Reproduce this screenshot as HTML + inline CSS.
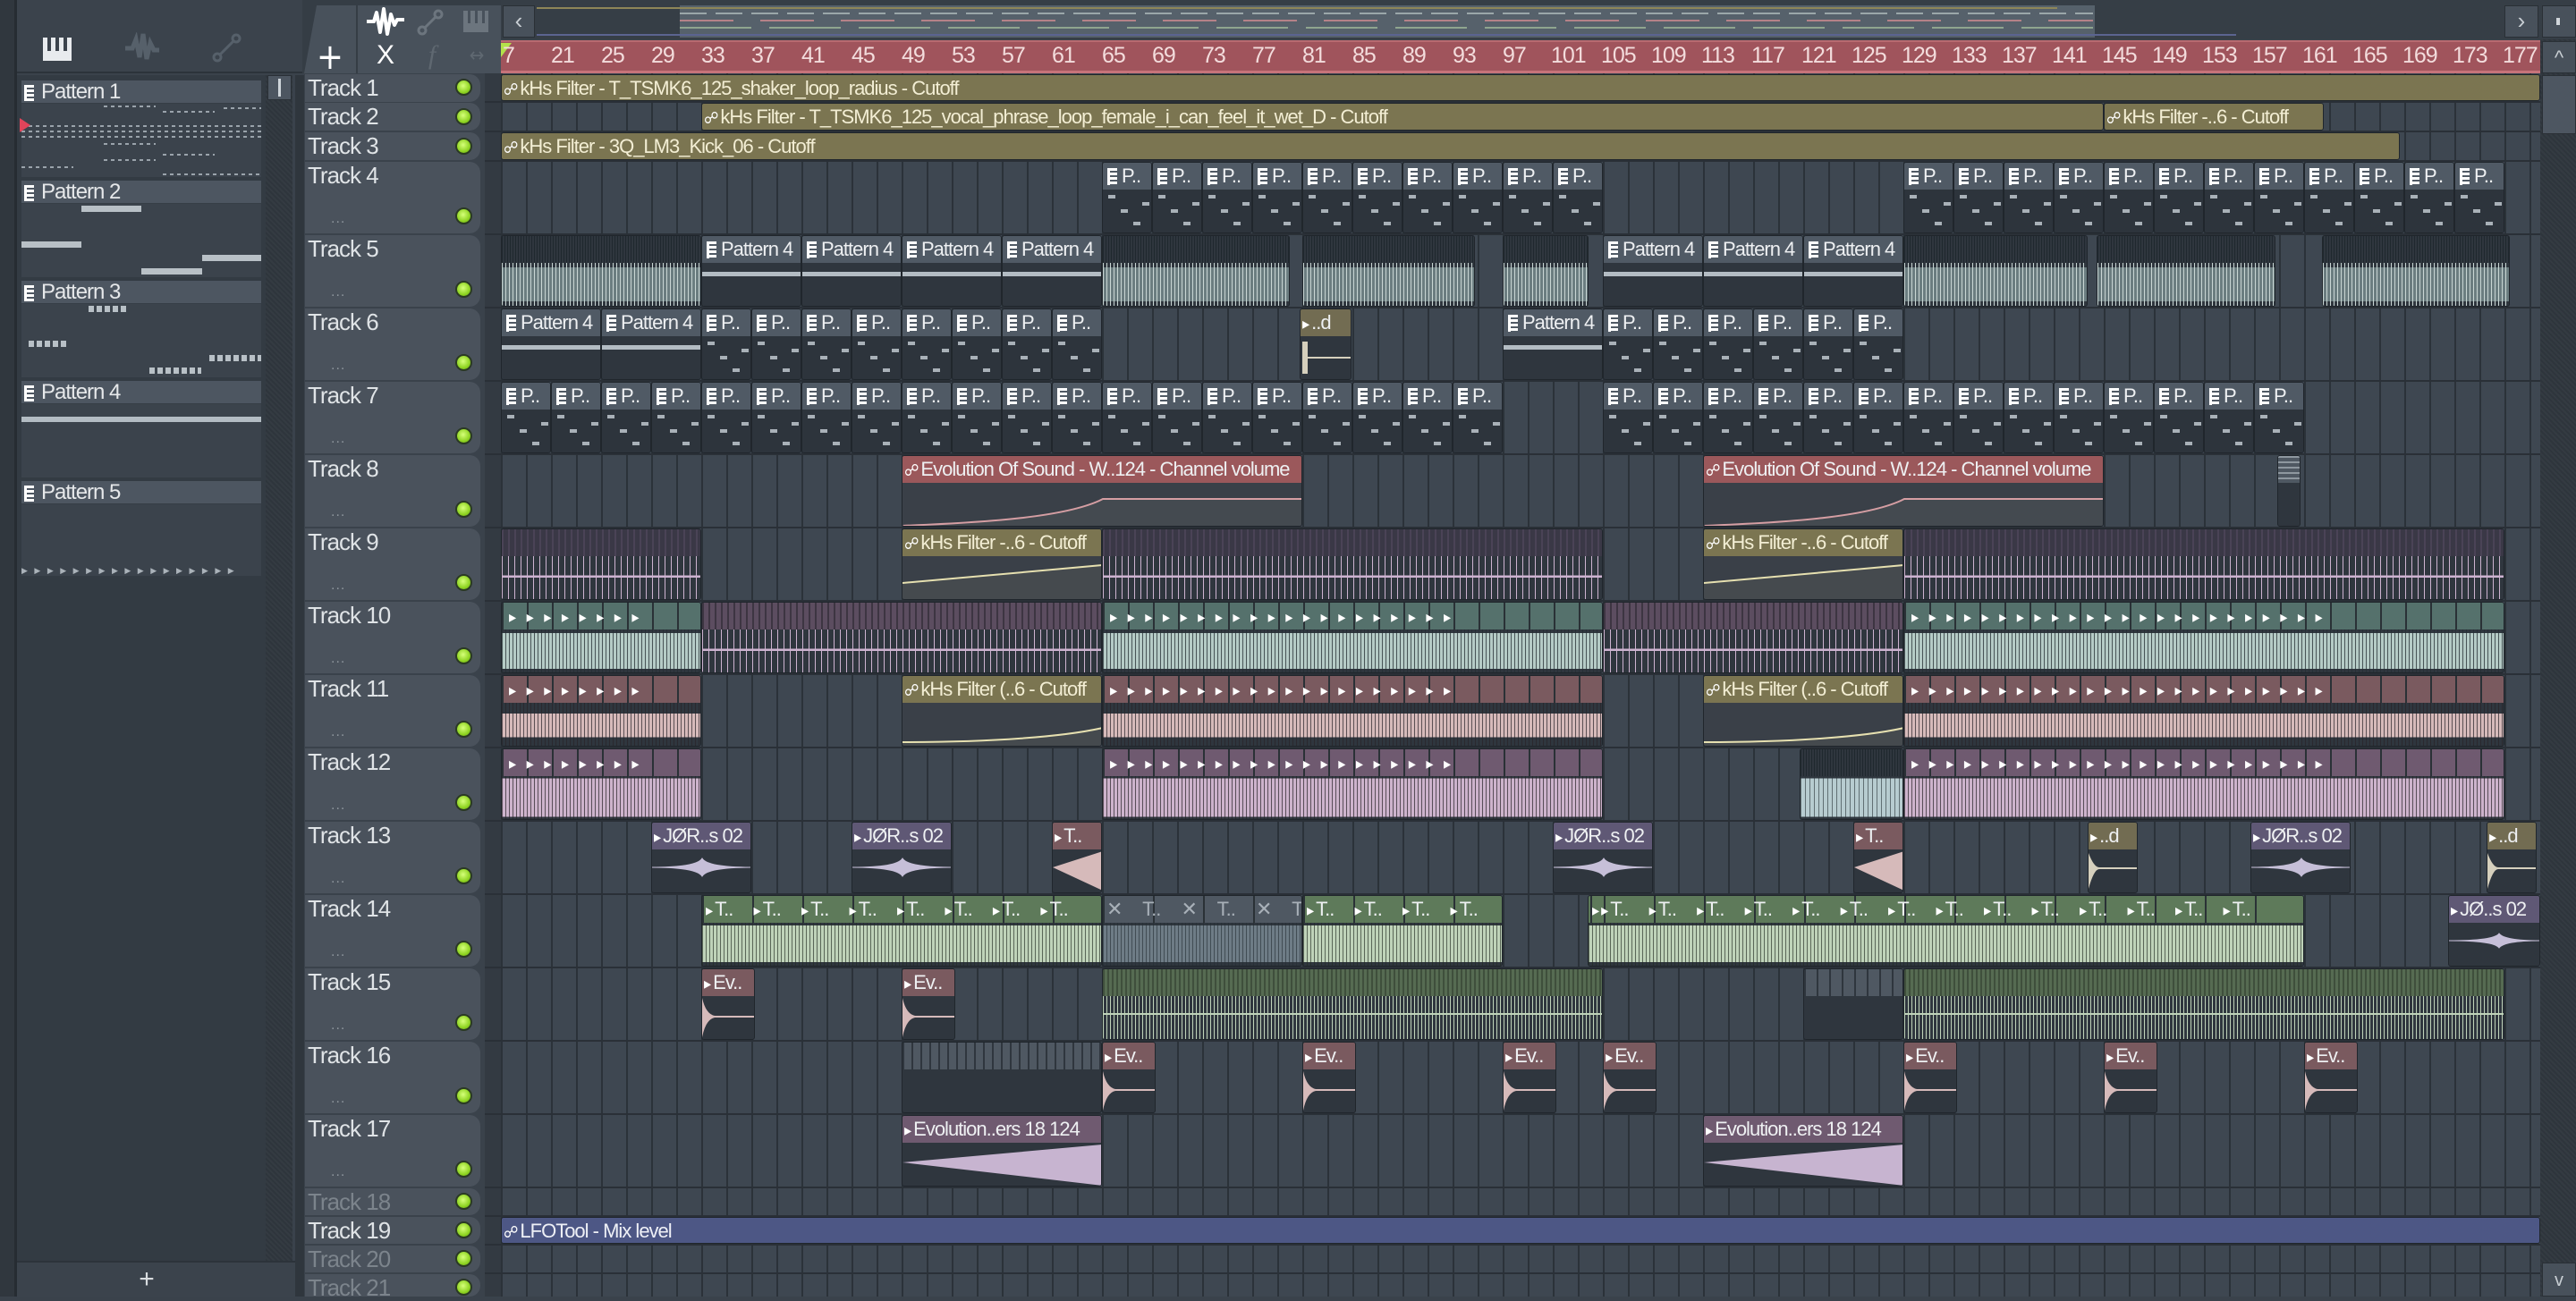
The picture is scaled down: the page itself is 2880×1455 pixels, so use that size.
<!DOCTYPE html>
<html><head><meta charset="utf-8"><style>
*{box-sizing:border-box}
body{margin:0;width:2880px;height:1450px;background:#3a424b;overflow:hidden;position:relative;font-family:"Liberation Sans Narrow","Liberation Sans",sans-serif;font-stretch:condensed}
.a{position:absolute}
.grid{left:560px;top:82px;width:2280px;height:1368px;background:#3e4751;background-image:repeating-linear-gradient(90deg,#2b3239 0 2px,transparent 2px 28px)}
.r{position:absolute;left:560px;width:2280px;overflow:hidden}
.hl{position:absolute;left:542px;width:2298px;height:2px;background:#2a3037}
.c{position:absolute;top:1px;bottom:1px;border:1px solid #20262c;border-radius:3px;overflow:hidden;background:#2f363e}
.h{height:30px;line-height:30px;font-size:22px;letter-spacing:-1px;color:#eef0f2;white-space:nowrap;overflow:hidden;padding-left:2px}
.sm .h{height:100%;line-height:30px}
.w{position:absolute;left:0;right:0;top:30px;bottom:0}
.pi{display:inline-block;width:11px;height:19px;margin:0 5px -3px 3px;background:repeating-linear-gradient(#fff 0 3px,transparent 3px 5px);border-left:3px solid #fff}
.ai{font-family:"DejaVu Sans",sans-serif;font-size:18px;margin-right:3px;color:#fff}
.ol{background:#7b7551}.ol .h{color:#f3eed4}
.pt .h{background:#505a65}
.pt .w{background:linear-gradient(#a9b1b8,#a9b1b8) no-repeat 6px 6px/8px 4px,linear-gradient(#a9b1b8,#a9b1b8) no-repeat 20px 22px/8px 4px,linear-gradient(#a9b1b8,#a9b1b8) no-repeat 34px 36px/8px 4px,linear-gradient(#a9b1b8,#a9b1b8) no-repeat 44px 14px/8px 4px,#2d343c}
.p8 .w{background:linear-gradient(#b3bcc3,#b3bcc3) no-repeat 0 10px/100% 5px,#2f363e}
.rd .h{background:#9b585b}
.te .h,.tes{background:#55716c}
.pk .h{background:#7a5a5f}
.pu .h{background:#6f5a70}
.gr .h{background:#5e7a5a}
.gy .h{background:#4f5862}
.lv .h{background:#5f5875}
.od .h{background:#726c52}
.wt{background:repeating-linear-gradient(90deg,rgba(35,45,50,.75) 0 1px,transparent 1px 4px),linear-gradient(#2f363e 0 8%,#b5cbc6 8% 92%,#2f363e 92%)}
.wp{background:repeating-linear-gradient(90deg,rgba(40,35,40,.7) 0 1px,transparent 1px 4px),linear-gradient(#2f363e 0 25%,#d6baba 25% 80%,#2f363e 80%)}
.wu{background:repeating-linear-gradient(90deg,rgba(40,35,40,.7) 0 1px,transparent 1px 4px),linear-gradient(#2f363e 0 5%,#cdb3cc 5% 95%,#2f363e 95%)}
.wg{background:repeating-linear-gradient(90deg,rgba(35,45,35,.65) 0 1px,transparent 1px 4px),linear-gradient(#2f363e 0 6%,#bfd3b9 6% 92%,#2f363e 92%)}
.wl{background:repeating-linear-gradient(90deg,#cdb3d0 0 1px,transparent 1px 7px),linear-gradient(#2f363e 0 45%,#cdb3d0 45% 50%,#2f363e 50%)}
.wd{background:repeating-linear-gradient(90deg,#c9d6d4 0 1px,transparent 1px 4px),linear-gradient(#2f363e 0 10%,#6b7d80 10% 90%,#2f363e 90%)}
.hs{position:absolute;left:0;right:0;top:0;height:30px;background:repeating-linear-gradient(90deg,rgba(20,30,35,.6) 0 1px,transparent 1px 3px)}
.th{position:absolute;left:341px;width:196px;background:#4a525c;border-radius:0 12px 12px 0;color:#dfe3e6;font-size:26px;letter-spacing:-1px;padding-left:3px;line-height:30px}
.th.d{color:#7c848c}
.led{position:absolute;left:509px;width:19px;height:19px;border-radius:50%;background:radial-gradient(circle at 45% 40%,#d6ff7a,#8fd422 60%,#5f9b12);border:2px solid #2b3a24}
.dots{position:absolute;left:370px;color:#8d959c;font-size:16px;letter-spacing:1px}
.rn{position:absolute;top:48px;font-size:25px;letter-spacing:-1px;color:#f3dcdc}
.ph{position:absolute;left:24px;width:268px;height:26px;background:#4d5661;color:#e6e8ea;font-size:24px;letter-spacing:-1px;line-height:26px;border-bottom:1px solid #363e46}
.ph .pi{height:18px;margin-right:8px}
</style></head><body>

<div class="a" style="left:0;top:0;width:16px;height:1450px;background:#30373e"></div>
<div class="a" style="left:16px;top:0;width:3px;height:1450px;background:#262c32"></div>
<div class="a" style="left:19px;top:0;width:320px;height:82px;background:#3b434c;border-bottom:2px solid #2c333a"></div>
<div class="a" style="left:48px;top:42px;width:32px;height:26px;background:#e8ebee"></div>
<div class="a" style="left:53px;top:42px;width:4px;height:15px;background:#3b434c"></div>
<div class="a" style="left:62px;top:42px;width:4px;height:15px;background:#3b434c"></div>
<div class="a" style="left:71px;top:42px;width:4px;height:15px;background:#3b434c"></div>
<svg class="a" style="left:138px;top:36px" width="42" height="36"><path d="M2 18h8l4-10 4 20 4-26 4 28 4-18 4 8h6" stroke="#56606a" stroke-width="5" fill="none"/></svg>
<svg class="a" style="left:236px;top:36px" width="36" height="36"><circle cx="7" cy="28" r="4" stroke="#56606a" stroke-width="3" fill="none"/><circle cx="28" cy="7" r="4" stroke="#56606a" stroke-width="3" fill="none"/><path d="M10 25L25 10" stroke="#56606a" stroke-width="3"/></svg>

<div class="a" style="left:19px;top:84px;width:278px;height:1326px;background:#333b43"></div>
<div class="a" style="left:24px;top:116px;width:268px;height:82px;background:#3b434c"></div>
<div class="a" style="left:24px;top:228px;width:268px;height:82px;background:#3b434c"></div>
<div class="a" style="left:24px;top:340px;width:268px;height:82px;background:#3b434c"></div>
<div class="a" style="left:24px;top:452px;width:268px;height:82px;background:#3b434c"></div>
<div class="a" style="left:24px;top:564px;width:268px;height:80px;background:#3b434c"></div>
<div class="ph" style="top:90px"><i class="pi"></i>Pattern 1</div>
<div class="ph" style="top:202px"><i class="pi"></i>Pattern 2</div>
<div class="ph" style="top:314px"><i class="pi"></i>Pattern 3</div>
<div class="ph" style="top:426px"><i class="pi"></i>Pattern 4</div>
<div class="ph" style="top:538px"><i class="pi"></i>Pattern 5</div>
<div class="a" style="left:24px;top:118px;width:268px;height:80px;background:
repeating-linear-gradient(90deg,#9aa3ab 0 4px,transparent 4px 8px) no-repeat 92px 0/58px 2px,
repeating-linear-gradient(90deg,#9aa3ab 0 4px,transparent 4px 8px) no-repeat 158px 6px/58px 2px,
repeating-linear-gradient(90deg,#9aa3ab 0 4px,transparent 4px 8px) no-repeat 226px 2px/58px 2px,
repeating-linear-gradient(90deg,#9aa3ab 0 4px,transparent 4px 8px) no-repeat 0 22px/268px 2px,
repeating-linear-gradient(90deg,#9aa3ab 0 4px,transparent 4px 8px) no-repeat 0 28px/268px 2px,
repeating-linear-gradient(90deg,#9aa3ab 0 4px,transparent 4px 8px) no-repeat 0 34px/268px 2px,
repeating-linear-gradient(90deg,#9aa3ab 0 4px,transparent 4px 8px) no-repeat 92px 42px/58px 2px,
repeating-linear-gradient(90deg,#9aa3ab 0 4px,transparent 4px 8px) no-repeat 158px 54px/58px 2px,
repeating-linear-gradient(90deg,#9aa3ab 0 4px,transparent 4px 8px) no-repeat 92px 60px/58px 2px,
repeating-linear-gradient(90deg,#9aa3ab 0 4px,transparent 4px 8px) no-repeat 0 68px/58px 2px,
repeating-linear-gradient(90deg,#9aa3ab 0 4px,transparent 4px 8px) no-repeat 158px 76px/120px 2px"></div>
<div class="a" style="left:22px;top:132px;width:0;height:0;border-top:8px solid transparent;border-bottom:8px solid transparent;border-left:12px solid #e0445a"></div>
<div class="a" style="left:91px;top:230px;width:67px;height:7px;background:#b8c0c6"></div>
<div class="a" style="left:24px;top:270px;width:67px;height:7px;background:#b8c0c6"></div>
<div class="a" style="left:226px;top:285px;width:66px;height:7px;background:#b8c0c6"></div>
<div class="a" style="left:158px;top:300px;width:68px;height:7px;background:#b8c0c6"></div>
<div class="a" style="left:99px;top:342px;width:42px;height:7px;background:repeating-linear-gradient(90deg,#b8c0c6 0 6px,transparent 6px 9px)"></div>
<div class="a" style="left:32px;top:381px;width:42px;height:7px;background:repeating-linear-gradient(90deg,#b8c0c6 0 6px,transparent 6px 9px)"></div>
<div class="a" style="left:234px;top:397px;width:58px;height:7px;background:repeating-linear-gradient(90deg,#b8c0c6 0 6px,transparent 6px 9px)"></div>
<div class="a" style="left:167px;top:411px;width:58px;height:7px;background:repeating-linear-gradient(90deg,#b8c0c6 0 6px,transparent 6px 9px)"></div>
<div class="a" style="left:24px;top:466px;width:268px;height:6px;background:#b3bcc3"></div>
<div class="a" style="left:24px;top:634px;width:268px;height:8px;font-size:9px;color:#aab2b9;line-height:8px;letter-spacing:7.5px;white-space:nowrap;overflow:hidden">▶▶▶▶▶▶▶▶▶▶▶▶▶▶▶▶▶</div>
<div class="a" style="left:297px;top:84px;width:30px;height:1326px;background:repeating-linear-gradient(45deg,#2e353c 0 2px,#343b42 2px 4px)"></div>
<div class="a" style="left:299px;top:84px;width:27px;height:28px;background:#4d5661;border:1px solid #2a3036"></div>
<div class="a" style="left:311px;top:88px;width:3px;height:20px;background:#cfd5da"></div>
<div class="a" style="left:19px;top:1410px;width:320px;height:40px;background:#3b434c;border-top:2px solid #2c333a;color:#d8dcdf;font-size:30px;text-align:center;line-height:38px;padding-right:30px">+</div>
<div class="a" style="left:330px;top:84px;width:10px;height:1366px;background:#2f363d"></div>

<div class="a" style="left:338px;top:0;width:222px;height:82px;background:#353d45"></div>
<div class="a" style="left:340px;top:6px;width:58px;height:76px;background:#48515b;clip-path:polygon(14px 0,100% 0,100% 100%,0 100%);border-radius:6px 0 0 0"></div>
<div class="a" style="left:340px;top:44px;width:58px;color:#fff;font-size:40px;text-align:center;line-height:40px;font-family:'DejaVu Sans',sans-serif">+</div>
<div class="a" style="left:400px;top:6px;width:160px;height:76px;background:#48515b"></div>
<svg class="a" style="left:408px;top:8px" width="46" height="32"><path d="M2 16h8l3-10 4 22 4-26 4 28 4-22 4 12 3-6h8" stroke="#fff" stroke-width="4" fill="none" stroke-linejoin="round"/></svg>
<svg class="a" style="left:466px;top:10px" width="30" height="30"><circle cx="6" cy="24" r="4" stroke="#6c757e" stroke-width="3" fill="none"/><circle cx="24" cy="6" r="4" stroke="#6c757e" stroke-width="3" fill="none"/><path d="M9 21L21 9" stroke="#6c757e" stroke-width="3"/></svg>
<div class="a" style="left:518px;top:12px;width:28px;height:24px;background:#6c757e"></div>
<div class="a" style="left:523px;top:12px;width:3px;height:14px;background:#48515b"></div>
<div class="a" style="left:531px;top:12px;width:3px;height:14px;background:#48515b"></div>
<div class="a" style="left:539px;top:12px;width:3px;height:14px;background:#48515b"></div>
<div class="a" style="left:416px;top:44px;width:30px;color:#fff;font-size:30px;line-height:36px;text-align:center;font-family:'Liberation Sans',sans-serif">X</div>
<div class="a" style="left:468px;top:44px;width:30px;color:#5f6871;font-size:30px;line-height:36px;text-align:center;font-style:italic;font-family:'Liberation Serif',serif">f</div>
<div class="a" style="left:518px;top:48px;width:30px;color:#5f6871;font-size:22px;line-height:30px;text-align:center;font-family:'DejaVu Sans',sans-serif">↔</div>

<div class="a" style="left:560px;top:0;width:2320px;height:44px;background:#363e46"></div>
<div class="a" style="left:562px;top:6px;width:36px;height:36px;background:#48515b;border:1px solid #2a3036;color:#c8ced3;font-size:26px;text-align:center;line-height:32px">‹</div>
<div class="a" style="left:760px;top:6px;width:1582px;height:36px;background:#56616b"></div>
<div class="a" style="left:600px;top:8px;width:1700px;height:2px;background:#8e8658"></div>
<div class="a" style="left:760px;top:14px;width:1580px;height:2px;background:repeating-linear-gradient(90deg,#9aa7a9 0 30px,transparent 30px 40px)"></div>
<div class="a" style="left:760px;top:22px;width:1580px;height:2px;background:repeating-linear-gradient(90deg,#b58288 0 60px,transparent 60px 90px)"></div>
<div class="a" style="left:760px;top:30px;width:1580px;height:2px;background:repeating-linear-gradient(90deg,#8fa58f 0 80px,transparent 80px 100px)"></div>
<div class="a" style="left:600px;top:38px;width:1900px;height:2px;background:#5b6490"></div>
<div class="a" style="left:2800px;top:6px;width:38px;height:36px;background:#48515b;border:1px solid #2a3036;color:#c8ced3;font-size:26px;text-align:center;line-height:32px">›</div>
<div class="a" style="left:2842px;top:6px;width:38px;height:36px;background:#48515b;border:1px solid #2a3036"></div>
<div class="a" style="left:2858px;top:20px;width:4px;height:8px;background:#d0d5da"></div>

<div class="a" style="left:560px;top:45px;width:2280px;height:37px;background:#a0545c;border-top:2px solid #b86a70;border-bottom:3px solid #c6737a"></div>
<div class="a" style="left:560px;top:48px;width:0;height:0;border-top:16px solid #b3e24a;border-right:12px solid transparent"></div>
<span class="rn" style="left:562px">7</span><span class="rn" style="left:616px">21</span><span class="rn" style="left:672px">25</span><span class="rn" style="left:728px">29</span><span class="rn" style="left:784px">33</span><span class="rn" style="left:840px">37</span><span class="rn" style="left:896px">41</span><span class="rn" style="left:952px">45</span><span class="rn" style="left:1008px">49</span><span class="rn" style="left:1064px">53</span><span class="rn" style="left:1120px">57</span><span class="rn" style="left:1176px">61</span><span class="rn" style="left:1232px">65</span><span class="rn" style="left:1288px">69</span><span class="rn" style="left:1344px">73</span><span class="rn" style="left:1400px">77</span><span class="rn" style="left:1456px">81</span><span class="rn" style="left:1512px">85</span><span class="rn" style="left:1568px">89</span><span class="rn" style="left:1624px">93</span><span class="rn" style="left:1680px">97</span><span class="rn" style="left:1734px">101</span><span class="rn" style="left:1790px">105</span><span class="rn" style="left:1846px">109</span><span class="rn" style="left:1902px">113</span><span class="rn" style="left:1958px">117</span><span class="rn" style="left:2014px">121</span><span class="rn" style="left:2070px">125</span><span class="rn" style="left:2126px">129</span><span class="rn" style="left:2182px">133</span><span class="rn" style="left:2238px">137</span><span class="rn" style="left:2294px">141</span><span class="rn" style="left:2350px">145</span><span class="rn" style="left:2406px">149</span><span class="rn" style="left:2462px">153</span><span class="rn" style="left:2518px">157</span><span class="rn" style="left:2574px">161</span><span class="rn" style="left:2630px">165</span><span class="rn" style="left:2686px">169</span><span class="rn" style="left:2742px">173</span><span class="rn" style="left:2798px">177</span>
<div class="a" style="left:2840px;top:44px;width:40px;height:1406px;background:repeating-linear-gradient(45deg,#2e353c 0 2px,#343b42 2px 4px)"></div>
<div class="a" style="left:2842px;top:46px;width:38px;height:36px;background:#48515b;border:1px solid #2a3036;color:#c8ced3;font-size:22px;text-align:center;line-height:36px">^</div>
<div class="a" style="left:2842px;top:84px;width:38px;height:66px;background:#4d5661;border:1px solid #2a3036"></div>
<div class="a" style="left:2842px;top:1412px;width:38px;height:38px;background:#48515b;border:1px solid #2a3036;color:#c8ced3;font-size:20px;text-align:center;line-height:38px">v</div>

<div class="a grid"></div>
<div class="a" style="left:542px;top:82px;width:18px;height:1368px;background:#333a42"></div>

<div class="th" style="top:83px;height:31px">Track 1</div><div class="led" style="top:88px"></div>
<div class="th" style="top:115px;height:31px">Track 2</div><div class="led" style="top:121px"></div>
<div class="th" style="top:148px;height:31px">Track 3</div><div class="led" style="top:154px"></div>
<div class="th" style="top:181px;height:80px">Track 4</div><div class="led" style="top:232px"></div><div class="dots" style="top:236px">...</div>
<div class="th" style="top:263px;height:80px">Track 5</div><div class="led" style="top:314px"></div><div class="dots" style="top:318px">...</div>
<div class="th" style="top:345px;height:80px">Track 6</div><div class="led" style="top:396px"></div><div class="dots" style="top:400px">...</div>
<div class="th" style="top:427px;height:80px">Track 7</div><div class="led" style="top:478px"></div><div class="dots" style="top:482px">...</div>
<div class="th" style="top:509px;height:80px">Track 8</div><div class="led" style="top:560px"></div><div class="dots" style="top:564px">...</div>
<div class="th" style="top:591px;height:80px">Track 9</div><div class="led" style="top:642px"></div><div class="dots" style="top:646px">...</div>
<div class="th" style="top:673px;height:80px">Track 10</div><div class="led" style="top:724px"></div><div class="dots" style="top:728px">...</div>
<div class="th" style="top:755px;height:80px">Track 11</div><div class="led" style="top:806px"></div><div class="dots" style="top:810px">...</div>
<div class="th" style="top:837px;height:80px">Track 12</div><div class="led" style="top:888px"></div><div class="dots" style="top:892px">...</div>
<div class="th" style="top:919px;height:80px">Track 13</div><div class="led" style="top:970px"></div><div class="dots" style="top:974px">...</div>
<div class="th" style="top:1001px;height:80px">Track 14</div><div class="led" style="top:1052px"></div><div class="dots" style="top:1056px">...</div>
<div class="th" style="top:1083px;height:80px">Track 15</div><div class="led" style="top:1134px"></div><div class="dots" style="top:1138px">...</div>
<div class="th" style="top:1165px;height:80px">Track 16</div><div class="led" style="top:1216px"></div><div class="dots" style="top:1220px">...</div>
<div class="th" style="top:1247px;height:80px">Track 17</div><div class="led" style="top:1298px"></div><div class="dots" style="top:1302px">...</div>
<div class="th d" style="top:1329px;height:30px">Track 18</div><div class="led" style="top:1334px"></div>
<div class="th" style="top:1361px;height:30px">Track 19</div><div class="led" style="top:1366px"></div>
<div class="th d" style="top:1393px;height:30px">Track 20</div><div class="led" style="top:1398px"></div>
<div class="th d" style="top:1425px;height:25px">Track 21</div><div class="led" style="top:1430px"></div>

<div class="hl" style="top:113px"></div><div class="hl" style="top:146px"></div><div class="hl" style="top:179px"></div><div class="hl" style="top:261px"></div><div class="hl" style="top:343px"></div><div class="hl" style="top:425px"></div><div class="hl" style="top:507px"></div><div class="hl" style="top:589px"></div><div class="hl" style="top:671px"></div><div class="hl" style="top:753px"></div><div class="hl" style="top:835px"></div><div class="hl" style="top:917px"></div><div class="hl" style="top:999px"></div><div class="hl" style="top:1081px"></div><div class="hl" style="top:1163px"></div><div class="hl" style="top:1245px"></div><div class="hl" style="top:1327px"></div><div class="hl" style="top:1359px"></div><div class="hl" style="top:1391px"></div><div class="hl" style="top:1423px"></div>

<div class="r sm" style="top:82px;height:32px"><div class="c ol" style="left:0;width:2280px"><div class="h"><span class="ai">☍</span>kHs Filter - T_TSMK6_125_shaker_loop_radius - Cutoff</div></div></div>
<div class="r sm" style="top:114px;height:33px"><div class="c ol" style="left:224px;width:1568px"><div class="h"><span class="ai">☍</span>kHs Filter - T_TSMK6_125_vocal_phrase_loop_female_i_can_feel_it_wet_D - Cutoff</div></div><div class="c ol" style="left:1792px;width:246px"><div class="h"><span class="ai">☍</span>kHs Filter -..6 - Cutoff</div></div></div>
<div class="r sm" style="top:147px;height:33px"><div class="c ol" style="left:0;width:2123px"><div class="h"><span class="ai">☍</span>kHs Filter - 3Q_LM3_Kick_06 - Cutoff</div></div></div>

<div class="r" style="top:180px;height:82px">
<div class="c pt" style="left:672px;width:56px"><div class="h"><i class="pi"></i>P..</div><div class="w"></div></div><div class="c pt" style="left:728px;width:56px"><div class="h"><i class="pi"></i>P..</div><div class="w"></div></div><div class="c pt" style="left:784px;width:56px"><div class="h"><i class="pi"></i>P..</div><div class="w"></div></div><div class="c pt" style="left:840px;width:56px"><div class="h"><i class="pi"></i>P..</div><div class="w"></div></div><div class="c pt" style="left:896px;width:56px"><div class="h"><i class="pi"></i>P..</div><div class="w"></div></div><div class="c pt" style="left:952px;width:56px"><div class="h"><i class="pi"></i>P..</div><div class="w"></div></div><div class="c pt" style="left:1008px;width:56px"><div class="h"><i class="pi"></i>P..</div><div class="w"></div></div><div class="c pt" style="left:1064px;width:56px"><div class="h"><i class="pi"></i>P..</div><div class="w"></div></div><div class="c pt" style="left:1120px;width:56px"><div class="h"><i class="pi"></i>P..</div><div class="w"></div></div><div class="c pt" style="left:1176px;width:56px"><div class="h"><i class="pi"></i>P..</div><div class="w"></div></div>
<div class="c pt" style="left:1568px;width:56px"><div class="h"><i class="pi"></i>P..</div><div class="w"></div></div><div class="c pt" style="left:1624px;width:56px"><div class="h"><i class="pi"></i>P..</div><div class="w"></div></div><div class="c pt" style="left:1680px;width:56px"><div class="h"><i class="pi"></i>P..</div><div class="w"></div></div><div class="c pt" style="left:1736px;width:56px"><div class="h"><i class="pi"></i>P..</div><div class="w"></div></div><div class="c pt" style="left:1792px;width:56px"><div class="h"><i class="pi"></i>P..</div><div class="w"></div></div><div class="c pt" style="left:1848px;width:56px"><div class="h"><i class="pi"></i>P..</div><div class="w"></div></div><div class="c pt" style="left:1904px;width:56px"><div class="h"><i class="pi"></i>P..</div><div class="w"></div></div><div class="c pt" style="left:1960px;width:56px"><div class="h"><i class="pi"></i>P..</div><div class="w"></div></div><div class="c pt" style="left:2016px;width:56px"><div class="h"><i class="pi"></i>P..</div><div class="w"></div></div><div class="c pt" style="left:2072px;width:56px"><div class="h"><i class="pi"></i>P..</div><div class="w"></div></div><div class="c pt" style="left:2128px;width:56px"><div class="h"><i class="pi"></i>P..</div><div class="w"></div></div><div class="c pt" style="left:2184px;width:56px"><div class="h"><i class="pi"></i>P..</div><div class="w"></div></div>
</div>

<div class="r" style="top:262px;height:82px">
<div class="c" style="left:0;width:224px"><div class="hs tes"></div><div class="w wd"></div></div>
<div class="c pt p8" style="left:224px;width:112px"><div class="h"><i class="pi"></i>Pattern 4</div><div class="w"></div></div><div class="c pt p8" style="left:336px;width:112px"><div class="h"><i class="pi"></i>Pattern 4</div><div class="w"></div></div><div class="c pt p8" style="left:448px;width:112px"><div class="h"><i class="pi"></i>Pattern 4</div><div class="w"></div></div><div class="c pt p8" style="left:560px;width:112px"><div class="h"><i class="pi"></i>Pattern 4</div><div class="w"></div></div>
<div class="c" style="left:672px;width:210px"><div class="hs tes"></div><div class="w wd"></div></div>
<div class="c" style="left:896px;width:193px"><div class="hs tes"></div><div class="w wd"></div></div>
<div class="c" style="left:1120px;width:96px"><div class="hs tes"></div><div class="w wd"></div></div>
<div class="c pt p8" style="left:1232px;width:112px"><div class="h"><i class="pi"></i>Pattern 4</div><div class="w"></div></div><div class="c pt p8" style="left:1344px;width:112px"><div class="h"><i class="pi"></i>Pattern 4</div><div class="w"></div></div><div class="c pt p8" style="left:1456px;width:112px"><div class="h"><i class="pi"></i>Pattern 4</div><div class="w"></div></div>
<div class="c" style="left:1568px;width:206px"><div class="hs tes"></div><div class="w wd"></div></div>
<div class="c" style="left:1784px;width:200px"><div class="hs tes"></div><div class="w wd"></div></div>
<div class="c" style="left:2036px;width:210px"><div class="hs tes"></div><div class="w wd"></div></div>
</div>

<div class="r" style="top:344px;height:82px">
<div class="c pt p8" style="left:0;width:112px"><div class="h"><i class="pi"></i>Pattern 4</div><div class="w"></div></div><div class="c pt p8" style="left:112px;width:112px"><div class="h"><i class="pi"></i>Pattern 4</div><div class="w"></div></div>
<div class="c pt" style="left:224px;width:56px"><div class="h"><i class="pi"></i>P..</div><div class="w"></div></div><div class="c pt" style="left:280px;width:56px"><div class="h"><i class="pi"></i>P..</div><div class="w"></div></div><div class="c pt" style="left:336px;width:56px"><div class="h"><i class="pi"></i>P..</div><div class="w"></div></div><div class="c pt" style="left:392px;width:56px"><div class="h"><i class="pi"></i>P..</div><div class="w"></div></div><div class="c pt" style="left:448px;width:56px"><div class="h"><i class="pi"></i>P..</div><div class="w"></div></div><div class="c pt" style="left:504px;width:56px"><div class="h"><i class="pi"></i>P..</div><div class="w"></div></div><div class="c pt" style="left:560px;width:56px"><div class="h"><i class="pi"></i>P..</div><div class="w"></div></div><div class="c pt" style="left:616px;width:56px"><div class="h"><i class="pi"></i>P..</div><div class="w"></div></div>
<div class="c od" style="left:893px;width:58px"><div class="h"><span class="ai">▸</span>..d</div><div class="w" style="background:linear-gradient(#d6d0bd,#d6d0bd) no-repeat 2px 6px/6px 36px,linear-gradient(#d6d0bd,#d6d0bd) no-repeat 8px 23px/50px 2px,#2f363e"></div></div>
<div class="c pt p8" style="left:1120px;width:112px"><div class="h"><i class="pi"></i>Pattern 4</div><div class="w"></div></div>
<div class="c pt" style="left:1232px;width:56px"><div class="h"><i class="pi"></i>P..</div><div class="w"></div></div><div class="c pt" style="left:1288px;width:56px"><div class="h"><i class="pi"></i>P..</div><div class="w"></div></div><div class="c pt" style="left:1344px;width:56px"><div class="h"><i class="pi"></i>P..</div><div class="w"></div></div><div class="c pt" style="left:1400px;width:56px"><div class="h"><i class="pi"></i>P..</div><div class="w"></div></div><div class="c pt" style="left:1456px;width:56px"><div class="h"><i class="pi"></i>P..</div><div class="w"></div></div><div class="c pt" style="left:1512px;width:56px"><div class="h"><i class="pi"></i>P..</div><div class="w"></div></div>
</div>

<div class="r" style="top:426px;height:82px">
<div class="c pt" style="left:0;width:56px"><div class="h"><i class="pi"></i>P..</div><div class="w"></div></div><div class="c pt" style="left:56px;width:56px"><div class="h"><i class="pi"></i>P..</div><div class="w"></div></div><div class="c pt" style="left:112px;width:56px"><div class="h"><i class="pi"></i>P..</div><div class="w"></div></div><div class="c pt" style="left:168px;width:56px"><div class="h"><i class="pi"></i>P..</div><div class="w"></div></div><div class="c pt" style="left:224px;width:56px"><div class="h"><i class="pi"></i>P..</div><div class="w"></div></div><div class="c pt" style="left:280px;width:56px"><div class="h"><i class="pi"></i>P..</div><div class="w"></div></div><div class="c pt" style="left:336px;width:56px"><div class="h"><i class="pi"></i>P..</div><div class="w"></div></div><div class="c pt" style="left:392px;width:56px"><div class="h"><i class="pi"></i>P..</div><div class="w"></div></div><div class="c pt" style="left:448px;width:56px"><div class="h"><i class="pi"></i>P..</div><div class="w"></div></div><div class="c pt" style="left:504px;width:56px"><div class="h"><i class="pi"></i>P..</div><div class="w"></div></div><div class="c pt" style="left:560px;width:56px"><div class="h"><i class="pi"></i>P..</div><div class="w"></div></div><div class="c pt" style="left:616px;width:56px"><div class="h"><i class="pi"></i>P..</div><div class="w"></div></div><div class="c pt" style="left:672px;width:56px"><div class="h"><i class="pi"></i>P..</div><div class="w"></div></div><div class="c pt" style="left:728px;width:56px"><div class="h"><i class="pi"></i>P..</div><div class="w"></div></div><div class="c pt" style="left:784px;width:56px"><div class="h"><i class="pi"></i>P..</div><div class="w"></div></div><div class="c pt" style="left:840px;width:56px"><div class="h"><i class="pi"></i>P..</div><div class="w"></div></div><div class="c pt" style="left:896px;width:56px"><div class="h"><i class="pi"></i>P..</div><div class="w"></div></div><div class="c pt" style="left:952px;width:56px"><div class="h"><i class="pi"></i>P..</div><div class="w"></div></div><div class="c pt" style="left:1008px;width:56px"><div class="h"><i class="pi"></i>P..</div><div class="w"></div></div><div class="c pt" style="left:1064px;width:56px"><div class="h"><i class="pi"></i>P..</div><div class="w"></div></div>
<div class="c pt" style="left:1232px;width:56px"><div class="h"><i class="pi"></i>P..</div><div class="w"></div></div><div class="c pt" style="left:1288px;width:56px"><div class="h"><i class="pi"></i>P..</div><div class="w"></div></div><div class="c pt" style="left:1344px;width:56px"><div class="h"><i class="pi"></i>P..</div><div class="w"></div></div><div class="c pt" style="left:1400px;width:56px"><div class="h"><i class="pi"></i>P..</div><div class="w"></div></div><div class="c pt" style="left:1456px;width:56px"><div class="h"><i class="pi"></i>P..</div><div class="w"></div></div><div class="c pt" style="left:1512px;width:56px"><div class="h"><i class="pi"></i>P..</div><div class="w"></div></div><div class="c pt" style="left:1568px;width:56px"><div class="h"><i class="pi"></i>P..</div><div class="w"></div></div><div class="c pt" style="left:1624px;width:56px"><div class="h"><i class="pi"></i>P..</div><div class="w"></div></div><div class="c pt" style="left:1680px;width:56px"><div class="h"><i class="pi"></i>P..</div><div class="w"></div></div><div class="c pt" style="left:1736px;width:56px"><div class="h"><i class="pi"></i>P..</div><div class="w"></div></div><div class="c pt" style="left:1792px;width:56px"><div class="h"><i class="pi"></i>P..</div><div class="w"></div></div><div class="c pt" style="left:1848px;width:56px"><div class="h"><i class="pi"></i>P..</div><div class="w"></div></div><div class="c pt" style="left:1904px;width:56px"><div class="h"><i class="pi"></i>P..</div><div class="w"></div></div><div class="c pt" style="left:1960px;width:56px"><div class="h"><i class="pi"></i>P..</div><div class="w"></div></div>
</div>

<div class="r" style="top:508px;height:82px">
<div class="c rd" style="left:448px;width:448px;background:#3a4048"><div class="h"><span class="ai">☍</span>Evolution Of Sound - W..124  - Channel volume</div><svg class="w" width="448" height="50"><path d="M0 50V48C100 44 180 38 220 20L224 18H448V50Z" fill="#444a50"/><path d="M0 48C100 44 180 38 220 20L224 18H448" stroke="#d59ea3" stroke-width="2" fill="none"/></svg></div>
<div class="c rd" style="left:1344px;width:448px;background:#3a4048"><div class="h"><span class="ai">☍</span>Evolution Of Sound - W..124  - Channel volume</div><svg class="w" width="448" height="50"><path d="M0 50V48C100 44 180 38 220 20L224 18H448V50Z" fill="#444a50"/><path d="M0 48C100 44 180 38 220 20L224 18H448" stroke="#d59ea3" stroke-width="2" fill="none"/></svg></div>
<div class="c" style="left:1986px;width:26px;background:#2f363e"><div class="h" style="background:repeating-linear-gradient(#8e979f 0 2px,#4f5862 2px 6px)"></div></div>
</div>

<div class="r" style="top:590px;height:82px">
<div class="c" style="left:0;width:224px"><div class="hs" style="background:repeating-linear-gradient(90deg,#4a4356 0 2px,#3a3846 2px 7px)"></div><div class="w wl"></div></div>
<div class="c ol" style="left:448px;width:224px;background:#3a4048"><div class="h" style="background:#7b7551"><span class="ai">☍</span>kHs Filter -..6 - Cutoff</div><svg class="w" width="224" height="50"><path d="M0 50V30L224 10V50Z" fill="#454a4e"/><path d="M0 30L224 10" stroke="#e6e0b0" stroke-width="2"/></svg></div>
<div class="c" style="left:672px;width:560px"><div class="hs" style="background:repeating-linear-gradient(90deg,#4a4356 0 2px,#3a3846 2px 7px)"></div><div class="w wl"></div></div>
<div class="c ol" style="left:1344px;width:224px;background:#3a4048"><div class="h" style="background:#7b7551"><span class="ai">☍</span>kHs Filter -..6 - Cutoff</div><svg class="w" width="224" height="50"><path d="M0 50V30L224 10V50Z" fill="#454a4e"/><path d="M0 30L224 10" stroke="#e6e0b0" stroke-width="2"/></svg></div>
<div class="c" style="left:1568px;width:672px"><div class="hs" style="background:repeating-linear-gradient(90deg,#4a4356 0 2px,#3a3846 2px 7px)"></div><div class="w wl"></div></div>
</div>

<div class="r" style="top:672px;height:82px">
<div class="c te" style="left:0;width:224px"><div class="h" style="background:repeating-linear-gradient(90deg,#2a3136 0 2px,#55716c 2px 28px);letter-spacing:11.5px;padding-left:8px"><span class="ai">▸▸▸▸▸▸▸▸</span></div><div class="w wt"></div></div>
<div class="c" style="left:224px;width:448px"><div class="hs" style="background:repeating-linear-gradient(90deg,#3d3542 0 2px,#5c4d60 2px 7px)"></div><div class="w wl"></div></div>
<div class="c te" style="left:672px;width:560px"><div class="h" style="background:repeating-linear-gradient(90deg,#2a3136 0 2px,#55716c 2px 28px);letter-spacing:11.5px;padding-left:8px"><span class="ai">▸▸▸▸▸▸▸▸▸▸▸▸▸▸▸▸▸▸▸▸</span></div><div class="w wt"></div></div>
<div class="c" style="left:1232px;width:336px"><div class="hs" style="background:repeating-linear-gradient(90deg,#3d3542 0 2px,#5c4d60 2px 7px)"></div><div class="w wl"></div></div>
<div class="c te" style="left:1568px;width:672px"><div class="h" style="background:repeating-linear-gradient(90deg,#2a3136 0 2px,#55716c 2px 28px);letter-spacing:11.5px;padding-left:8px"><span class="ai">▸▸▸▸▸▸▸▸▸▸▸▸▸▸▸▸▸▸▸▸▸▸▸▸</span></div><div class="w wt"></div></div>
</div>

<div class="r" style="top:754px;height:82px">
<div class="c pk" style="left:0;width:224px"><div class="h" style="background:repeating-linear-gradient(90deg,#2a3136 0 2px,#7a5a5f 2px 28px);letter-spacing:11.5px;padding-left:8px"><span class="ai">▸▸▸▸▸▸▸▸</span></div><div class="w wp"></div></div>
<div class="c ol" style="left:448px;width:224px;background:#3a4048"><div class="h" style="background:#7b7551"><span class="ai">☍</span>kHs Filter (..6 - Cutoff</div><svg class="w" width="224" height="50"><path d="M0 50V44C100 44 180 38 224 28V50Z" fill="#454a4e"/><path d="M0 44C100 44 180 38 224 28" stroke="#e6e0b0" stroke-width="2" fill="none"/></svg></div>
<div class="c pk" style="left:672px;width:560px"><div class="h" style="background:repeating-linear-gradient(90deg,#2a3136 0 2px,#7a5a5f 2px 28px);letter-spacing:11.5px;padding-left:8px"><span class="ai">▸▸▸▸▸▸▸▸▸▸▸▸▸▸▸▸▸▸▸▸</span></div><div class="w wp"></div></div>
<div class="c ol" style="left:1344px;width:224px;background:#3a4048"><div class="h" style="background:#7b7551"><span class="ai">☍</span>kHs Filter (..6 - Cutoff</div><svg class="w" width="224" height="50"><path d="M0 50V44C100 44 180 38 224 28V50Z" fill="#454a4e"/><path d="M0 44C100 44 180 38 224 28" stroke="#e6e0b0" stroke-width="2" fill="none"/></svg></div>
<div class="c pk" style="left:1568px;width:672px"><div class="h" style="background:repeating-linear-gradient(90deg,#2a3136 0 2px,#7a5a5f 2px 28px);letter-spacing:11.5px;padding-left:8px"><span class="ai">▸▸▸▸▸▸▸▸▸▸▸▸▸▸▸▸▸▸▸▸▸▸▸▸</span></div><div class="w wp"></div></div>
</div>

<div class="r" style="top:836px;height:82px">
<div class="c pu" style="left:0;width:224px"><div class="h" style="background:repeating-linear-gradient(90deg,#2a3136 0 2px,#6f5a70 2px 28px);letter-spacing:11.5px;padding-left:8px"><span class="ai">▸▸▸▸▸▸▸▸</span></div><div class="w wu"></div></div>
<div class="c pu" style="left:672px;width:560px"><div class="h" style="background:repeating-linear-gradient(90deg,#2a3136 0 2px,#6f5a70 2px 28px);letter-spacing:11.5px;padding-left:8px"><span class="ai">▸▸▸▸▸▸▸▸▸▸▸▸▸▸▸▸▸▸▸▸</span></div><div class="w wu"></div></div>
<div class="c" style="left:1452px;width:116px"><div class="hs tes"></div><div class="w" style="background:repeating-linear-gradient(90deg,rgba(40,50,55,.6) 0 1px,transparent 1px 5px),linear-gradient(#2f363e 0 5%,#b7ccd0 5% 95%,#2f363e 95%)"></div></div>
<div class="c pu" style="left:1568px;width:672px"><div class="h" style="background:repeating-linear-gradient(90deg,#2a3136 0 2px,#6f5a70 2px 28px);letter-spacing:11.5px;padding-left:8px"><span class="ai">▸▸▸▸▸▸▸▸▸▸▸▸▸▸▸▸▸▸▸▸▸▸▸▸</span></div><div class="w wu"></div></div>
</div>

<div class="r" style="top:918px;height:82px">
<div class="c lv" style="left:168px;width:112px"><div class="h"><span class="ai">▸</span>JØR..s 02</div><svg class="w" width="112" height="50"><path d="M0 20Q50 20 56 10Q62 20 112 20Q62 20 56 30Q50 20 0 20Z" fill="#c6bfd8" stroke="#c6bfd8"/></svg></div>
<div class="c lv" style="left:392px;width:112px"><div class="h"><span class="ai">▸</span>JØR..s 02</div><svg class="w" width="112" height="50"><path d="M0 20Q50 20 56 10Q62 20 112 20Q62 20 56 30Q50 20 0 20Z" fill="#c6bfd8" stroke="#c6bfd8"/></svg></div>
<div class="c pk" style="left:616px;width:56px"><div class="h"><span class="ai">▸</span>T..</div><svg class="w" width="56" height="50"><path d="M0 20L56 2V46Z" fill="#d6baba"/></svg></div>
<div class="c lv" style="left:1176px;width:112px"><div class="h"><span class="ai">▸</span>JØR..s 02</div><svg class="w" width="112" height="50"><path d="M0 20Q50 20 56 10Q62 20 112 20Q62 20 56 30Q50 20 0 20Z" fill="#c6bfd8" stroke="#c6bfd8"/></svg></div>
<div class="c pk" style="left:1512px;width:56px"><div class="h"><span class="ai">▸</span>T..</div><svg class="w" width="56" height="50"><path d="M0 20L56 2V46Z" fill="#d6baba"/></svg></div>
<div class="c od" style="left:1774px;width:56px"><div class="h"><span class="ai">▸</span>..d</div><svg class="w" width="56" height="50"><path d="M0 4Q6 20 12 20H56V22H12Q6 22 0 44Z" fill="#d6d0bd"/></svg></div>
<div class="c lv" style="left:1956px;width:112px"><div class="h"><span class="ai">▸</span>JØR..s 02</div><svg class="w" width="112" height="50"><path d="M0 20Q50 20 56 10Q62 20 112 20Q62 20 56 30Q50 20 0 20Z" fill="#c6bfd8" stroke="#c6bfd8"/></svg></div>
<div class="c od" style="left:2220px;width:56px"><div class="h"><span class="ai">▸</span>..d</div><svg class="w" width="56" height="50"><path d="M0 4Q6 20 12 20H56V22H12Q6 22 0 44Z" fill="#d6d0bd"/></svg></div>
</div>

<div class="r" style="top:1000px;height:82px">
<div class="c gr" style="left:224px;width:448px"><div class="h" style="background:repeating-linear-gradient(90deg,#2a3136 0 2px,#5e7a5a 2px 56px);word-spacing:18px;padding-left:4px"><span class="ai">▸</span>T.. <span class="ai">▸</span>T.. <span class="ai">▸</span>T.. <span class="ai">▸</span>T.. <span class="ai">▸</span>T.. <span class="ai">▸</span>T.. <span class="ai">▸</span>T.. <span class="ai">▸</span>T..</div><div class="w wg"></div></div>
<div class="c gy" style="left:672px;width:224px"><div class="h" style="background:repeating-linear-gradient(90deg,#2a3136 0 2px,#4f5862 2px 56px);word-spacing:18px;padding-left:4px;color:#a8b0b8">✕ T.. ✕ T.. ✕ T.. ✕ T..</div><div class="w" style="background:repeating-linear-gradient(90deg,rgba(35,45,50,.6) 0 1px,transparent 1px 4px),linear-gradient(#2f363e 0 6%,#6e7c86 6% 92%,#2f363e 92%)"></div></div>
<div class="c gr" style="left:896px;width:224px"><div class="h" style="background:repeating-linear-gradient(90deg,#2a3136 0 2px,#5e7a5a 2px 56px);word-spacing:18px;padding-left:4px"><span class="ai">▸</span>T.. <span class="ai">▸</span>T.. <span class="ai">▸</span>T.. <span class="ai">▸</span>T..</div><div class="w wg"></div></div>
<div class="c gr" style="left:1215px;width:801px"><div class="h" style="background:repeating-linear-gradient(90deg,#2a3136 0 2px,#5e7a5a 2px 56px);background-position:17px 0;word-spacing:18px;padding-left:4px"><span class="ai">▸</span><span class="ai">▸</span>T.. <span class="ai">▸</span>T.. <span class="ai">▸</span>T.. <span class="ai">▸</span>T.. <span class="ai">▸</span>T.. <span class="ai">▸</span>T.. <span class="ai">▸</span>T.. <span class="ai">▸</span>T.. <span class="ai">▸</span>T.. <span class="ai">▸</span>T.. <span class="ai">▸</span>T.. <span class="ai">▸</span>T.. <span class="ai">▸</span>T.. <span class="ai">▸</span>T..</div><div class="w wg"></div></div>
<div class="c lv" style="left:2177px;width:103px"><div class="h"><span class="ai">▸</span>JØ..s 02</div><svg class="w" width="103" height="50"><path d="M0 20Q50 20 56 12Q62 20 103 20Q62 20 56 28Q50 20 0 20Z" fill="#c6bfd8" stroke="#c6bfd8"/></svg></div>
</div>

<div class="r" style="top:1082px;height:82px">
<div class="c pk" style="left:224px;width:60px"><div class="h"><span class="ai">▸</span>Ev..</div><svg class="w" width="60" height="50"><path d="M0 2Q4 20 14 22H60V24H14Q4 26 0 46Z" fill="#d6baba"/></svg></div>
<div class="c pk" style="left:448px;width:60px"><div class="h"><span class="ai">▸</span>Ev..</div><svg class="w" width="60" height="50"><path d="M0 2Q4 20 14 22H60V24H14Q4 26 0 46Z" fill="#d6baba"/></svg></div>
<div class="c" style="left:672px;width:560px"><div class="hs" style="background:repeating-linear-gradient(90deg,#3f4f3c 0 2px,#566b52 2px 5px)"></div><div class="w" style="background:repeating-linear-gradient(90deg,#bfd3b9 0 1px,transparent 1px 4px),linear-gradient(#2f363e 0 40%,#bfd3b9 40% 44%,#2f363e 44%)"></div></div>
<div class="c" style="left:1456px;width:112px"><div class="h" style="background:repeating-linear-gradient(90deg,#2f363e 0 2px,#4f5862 2px 14px)"></div></div>
<div class="c" style="left:1568px;width:672px"><div class="hs" style="background:repeating-linear-gradient(90deg,#3f4f3c 0 2px,#566b52 2px 5px)"></div><div class="w" style="background:repeating-linear-gradient(90deg,#bfd3b9 0 1px,transparent 1px 4px),linear-gradient(#2f363e 0 40%,#bfd3b9 40% 44%,#2f363e 44%)"></div></div>
</div>

<div class="r" style="top:1164px;height:82px">
<div class="c" style="left:448px;width:224px"><div class="h" style="background:repeating-linear-gradient(90deg,#2f363e 0 2px,#4f5862 2px 10px)"></div></div>
<div class="c pk" style="left:672px;width:60px"><div class="h"><span class="ai">▸</span>Ev..</div><svg class="w" width="60" height="50"><path d="M0 2Q4 20 14 22H60V24H14Q4 26 0 46Z" fill="#d6baba"/></svg></div>
<div class="c pk" style="left:896px;width:60px"><div class="h"><span class="ai">▸</span>Ev..</div><svg class="w" width="60" height="50"><path d="M0 2Q4 20 14 22H60V24H14Q4 26 0 46Z" fill="#d6baba"/></svg></div>
<div class="c pk" style="left:1120px;width:60px"><div class="h"><span class="ai">▸</span>Ev..</div><svg class="w" width="60" height="50"><path d="M0 2Q4 20 14 22H60V24H14Q4 26 0 46Z" fill="#d6baba"/></svg></div>
<div class="c pk" style="left:1232px;width:60px"><div class="h"><span class="ai">▸</span>Ev..</div><svg class="w" width="60" height="50"><path d="M0 2Q4 20 14 22H60V24H14Q4 26 0 46Z" fill="#d6baba"/></svg></div>
<div class="c pk" style="left:1568px;width:60px"><div class="h"><span class="ai">▸</span>Ev..</div><svg class="w" width="60" height="50"><path d="M0 2Q4 20 14 22H60V24H14Q4 26 0 46Z" fill="#d6baba"/></svg></div>
<div class="c pk" style="left:1792px;width:60px"><div class="h"><span class="ai">▸</span>Ev..</div><svg class="w" width="60" height="50"><path d="M0 2Q4 20 14 22H60V24H14Q4 26 0 46Z" fill="#d6baba"/></svg></div>
<div class="c pk" style="left:2016px;width:60px"><div class="h"><span class="ai">▸</span>Ev..</div><svg class="w" width="60" height="50"><path d="M0 2Q4 20 14 22H60V24H14Q4 26 0 46Z" fill="#d6baba"/></svg></div>
</div>

<div class="r" style="top:1246px;height:82px">
<div class="c pu" style="left:448px;width:224px"><div class="h"><span class="ai">▸</span>Evolution..ers 18 124</div><svg class="w" width="224" height="50"><path d="M0 22L224 2V48Z" fill="#c7b4d0"/></svg></div>
<div class="c pu" style="left:1344px;width:224px"><div class="h"><span class="ai">▸</span>Evolution..ers 18 124</div><svg class="w" width="224" height="50"><path d="M0 22L224 2V48Z" fill="#c7b4d0"/></svg></div>
</div>

<div class="r sm" style="top:1360px;height:32px"><div class="c" style="left:0;width:2280px;background:#4d5785"><div class="h" style="color:#eef0f6"><span class="ai">☍</span>LFOTool - Mix level</div></div></div>

</body></html>
